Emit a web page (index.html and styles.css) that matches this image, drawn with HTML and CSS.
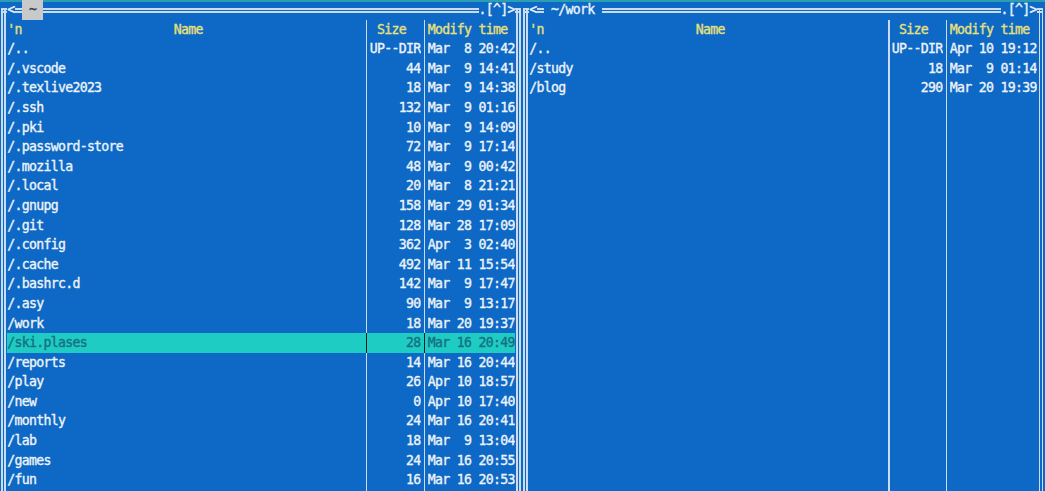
FILE: index.html
```html
<!DOCTYPE html>
<html>
<head>
<meta charset="utf-8">
<link rel="stylesheet" href="styles.css">
</head>
<body>
<div class="screen">
  <section class="panel">
    <div class="title"><span class="corner tl"></span><span class="t">&lt;</span><span class="hl one"></span><span class="tab"> ~ </span><span class="hl grow"></span><span class="t">.[^]&gt;</span><span class="corner tr"></span></div>
    <div class="row hdr"><i class="vb"></i><span class="name">'n                     Name</span><i class="sep"></i><span class="size"> Size</span><i class="sep"></i><span class="time">Modify time</span><i class="vb"></i></div>
    <div class="row"><i class="vb"></i><span class="name">/..</span><i class="sep"></i><span class="size">UP--DIR</span><i class="sep"></i><span class="time">Mar  8 20:42</span><i class="vb"></i></div>
    <div class="row"><i class="vb"></i><span class="name">/.vscode</span><i class="sep"></i><span class="size">44</span><i class="sep"></i><span class="time">Mar  9 14:41</span><i class="vb"></i></div>
    <div class="row"><i class="vb"></i><span class="name">/.texlive2023</span><i class="sep"></i><span class="size">18</span><i class="sep"></i><span class="time">Mar  9 14:38</span><i class="vb"></i></div>
    <div class="row"><i class="vb"></i><span class="name">/.ssh</span><i class="sep"></i><span class="size">132</span><i class="sep"></i><span class="time">Mar  9 01:16</span><i class="vb"></i></div>
    <div class="row"><i class="vb"></i><span class="name">/.pki</span><i class="sep"></i><span class="size">10</span><i class="sep"></i><span class="time">Mar  9 14:09</span><i class="vb"></i></div>
    <div class="row"><i class="vb"></i><span class="name">/.password-store</span><i class="sep"></i><span class="size">72</span><i class="sep"></i><span class="time">Mar  9 17:14</span><i class="vb"></i></div>
    <div class="row"><i class="vb"></i><span class="name">/.mozilla</span><i class="sep"></i><span class="size">48</span><i class="sep"></i><span class="time">Mar  9 00:42</span><i class="vb"></i></div>
    <div class="row"><i class="vb"></i><span class="name">/.local</span><i class="sep"></i><span class="size">20</span><i class="sep"></i><span class="time">Mar  8 21:21</span><i class="vb"></i></div>
    <div class="row"><i class="vb"></i><span class="name">/.gnupg</span><i class="sep"></i><span class="size">158</span><i class="sep"></i><span class="time">Mar 29 01:34</span><i class="vb"></i></div>
    <div class="row"><i class="vb"></i><span class="name">/.git</span><i class="sep"></i><span class="size">128</span><i class="sep"></i><span class="time">Mar 28 17:09</span><i class="vb"></i></div>
    <div class="row"><i class="vb"></i><span class="name">/.config</span><i class="sep"></i><span class="size">362</span><i class="sep"></i><span class="time">Apr  3 02:40</span><i class="vb"></i></div>
    <div class="row"><i class="vb"></i><span class="name">/.cache</span><i class="sep"></i><span class="size">492</span><i class="sep"></i><span class="time">Mar 11 15:54</span><i class="vb"></i></div>
    <div class="row"><i class="vb"></i><span class="name">/.bashrc.d</span><i class="sep"></i><span class="size">142</span><i class="sep"></i><span class="time">Mar  9 17:47</span><i class="vb"></i></div>
    <div class="row"><i class="vb"></i><span class="name">/.asy</span><i class="sep"></i><span class="size">90</span><i class="sep"></i><span class="time">Mar  9 13:17</span><i class="vb"></i></div>
    <div class="row"><i class="vb"></i><span class="name">/work</span><i class="sep"></i><span class="size">18</span><i class="sep"></i><span class="time">Mar 20 19:37</span><i class="vb"></i></div>
    <div class="row sel"><i class="vb"></i><span class="name">/ski.plases</span><i class="sep"></i><span class="size">28</span><i class="sep"></i><span class="time">Mar 16 20:49</span><i class="vb"></i></div>
    <div class="row"><i class="vb"></i><span class="name">/reports</span><i class="sep"></i><span class="size">14</span><i class="sep"></i><span class="time">Mar 16 20:44</span><i class="vb"></i></div>
    <div class="row"><i class="vb"></i><span class="name">/play</span><i class="sep"></i><span class="size">26</span><i class="sep"></i><span class="time">Apr 10 18:57</span><i class="vb"></i></div>
    <div class="row"><i class="vb"></i><span class="name">/new</span><i class="sep"></i><span class="size">0</span><i class="sep"></i><span class="time">Apr 10 17:40</span><i class="vb"></i></div>
    <div class="row"><i class="vb"></i><span class="name">/monthly</span><i class="sep"></i><span class="size">24</span><i class="sep"></i><span class="time">Mar 16 20:41</span><i class="vb"></i></div>
    <div class="row"><i class="vb"></i><span class="name">/lab</span><i class="sep"></i><span class="size">18</span><i class="sep"></i><span class="time">Mar  9 13:04</span><i class="vb"></i></div>
    <div class="row"><i class="vb"></i><span class="name">/games</span><i class="sep"></i><span class="size">24</span><i class="sep"></i><span class="time">Mar 16 20:55</span><i class="vb"></i></div>
    <div class="row"><i class="vb"></i><span class="name">/fun</span><i class="sep"></i><span class="size">16</span><i class="sep"></i><span class="time">Mar 16 20:53</span><i class="vb"></i></div>
    <div class="row fill"><i class="vb"></i><span class="name"></span><i class="sep"></i><span class="size"></span><i class="sep"></i><span class="time"></span><i class="vb"></i></div>
  </section>
  <section class="panel">
    <div class="title"><span class="corner tl"></span><span class="t">&lt;</span><span class="hl one"></span><span class="t"> ~/work </span><span class="hl grow"></span><span class="t">.[^]&gt;</span><span class="corner tr"></span></div>
    <div class="row hdr"><i class="vb"></i><span class="name">'n                     Name</span><i class="sep"></i><span class="size"> Size</span><i class="sep"></i><span class="time">Modify time</span><i class="vb"></i></div>
    <div class="row"><i class="vb"></i><span class="name">/..</span><i class="sep"></i><span class="size">UP--DIR</span><i class="sep"></i><span class="time">Apr 10 19:12</span><i class="vb"></i></div>
    <div class="row"><i class="vb"></i><span class="name">/study</span><i class="sep"></i><span class="size">18</span><i class="sep"></i><span class="time">Mar  9 01:14</span><i class="vb"></i></div>
    <div class="row"><i class="vb"></i><span class="name">/blog</span><i class="sep"></i><span class="size">290</span><i class="sep"></i><span class="time">Mar 20 19:39</span><i class="vb"></i></div>
    <div class="row fill"><i class="vb"></i><span class="name"></span><i class="sep"></i><span class="size"></span><i class="sep"></i><span class="time"></span><i class="vb"></i></div>
  </section>
</div>
</body>
</html>
```

FILE: styles.css
```css
:root {
  --bg: #0d69c5;
  --line: #cadcf0;
  --fg: #eef3f9;
  --hdr: #e8e07a;
  --cyan: #1fccc4;
  --selfg: #157080;
}

html, body {
  margin: 0;
  padding: 0;
  background: var(--bg);
  overflow: hidden;
}

.screen {
  display: flex;
  width: 1045px;
  height: 491px;
  box-shadow: inset 0 2px 0 #2a9fb4;
  font-family: "DejaVu Sans Mono", monospace;
  font-size: 13.2px;
  letter-spacing: -0.7px;
  line-height: 19.6px;
  color: var(--fg);
  -webkit-text-stroke: 0.35px currentColor;
  white-space: pre;
}

.panel {
  display: flex;
  flex-direction: column;
  width: 522px;
  height: 491px;
}

.title {
  display: flex;
  height: 19.6px;
  flex: none;
}

.title .t {
  display: block;
}

.tab {
  display: block;
  background: #c8c9cb;
  color: #3a3d44;
}

.hl {
  display: block;
  background: linear-gradient(180deg, transparent 8.3px, var(--line) 8.3px 9.8px, transparent 9.8px 11.3px, var(--line) 11.3px 12.8px, transparent 12.8px);
}
.hl.one { width: 7.25px; }
.hl.grow { flex: 1; }

.corner {
  display: block;
  width: 7.25px;
}
.corner.tl {
  background:
    linear-gradient(90deg, transparent 1.5px, var(--line) 1.5px 3px, transparent 3px 4.5px, var(--line) 4.5px 6px, transparent 6px) 0 8.3px / 100% 100% no-repeat,
    linear-gradient(180deg, transparent 8.3px, var(--line) 8.3px 9.8px, transparent 9.8px 11.3px, var(--line) 11.3px 12.8px, transparent 12.8px) 1.5px 0 / 100% 100% no-repeat;
}
.corner.tr {
  background:
    linear-gradient(90deg, transparent 1.5px, var(--line) 1.5px 3px, transparent 3px 4.5px, var(--line) 4.5px 6px, transparent 6px) 0 8.3px / 100% 100% no-repeat,
    linear-gradient(180deg, transparent 8.3px, var(--line) 8.3px 9.8px, transparent 9.8px 11.3px, var(--line) 11.3px 12.8px, transparent 12.8px) 0 0 / 6px 100% no-repeat;
}

.row {
  display: grid;
  grid-template-columns: 7.25px 355.25px 7.25px 50.75px 7.25px 87px 7.25px;
  height: 19.6px;
  flex: none;
}
.row.fill {
  flex: 1;
  height: auto;
}

.row > * {
  display: block;
  overflow: hidden;
  font-style: normal;
}

.vb {
  background: linear-gradient(90deg, transparent 1.5px, var(--line) 1.5px 3px, transparent 3px 4.5px, var(--line) 4.5px 6px, transparent 6px);
}

.sep {
  background: linear-gradient(90deg, transparent 3px, var(--line) 3px 4.5px, transparent 4.5px);
}

.size {
  text-align: right;
}

.hdr {
  color: var(--hdr);
}
.hdr .size {
  text-align: left;
}

.sel .name,
.sel .size,
.sel .time {
  background: var(--cyan);
  color: var(--selfg);
}
.sel .sep {
  background: linear-gradient(90deg, var(--cyan) 3px, #0f1b24 3px 4.5px, var(--cyan) 4.5px);
}
```
